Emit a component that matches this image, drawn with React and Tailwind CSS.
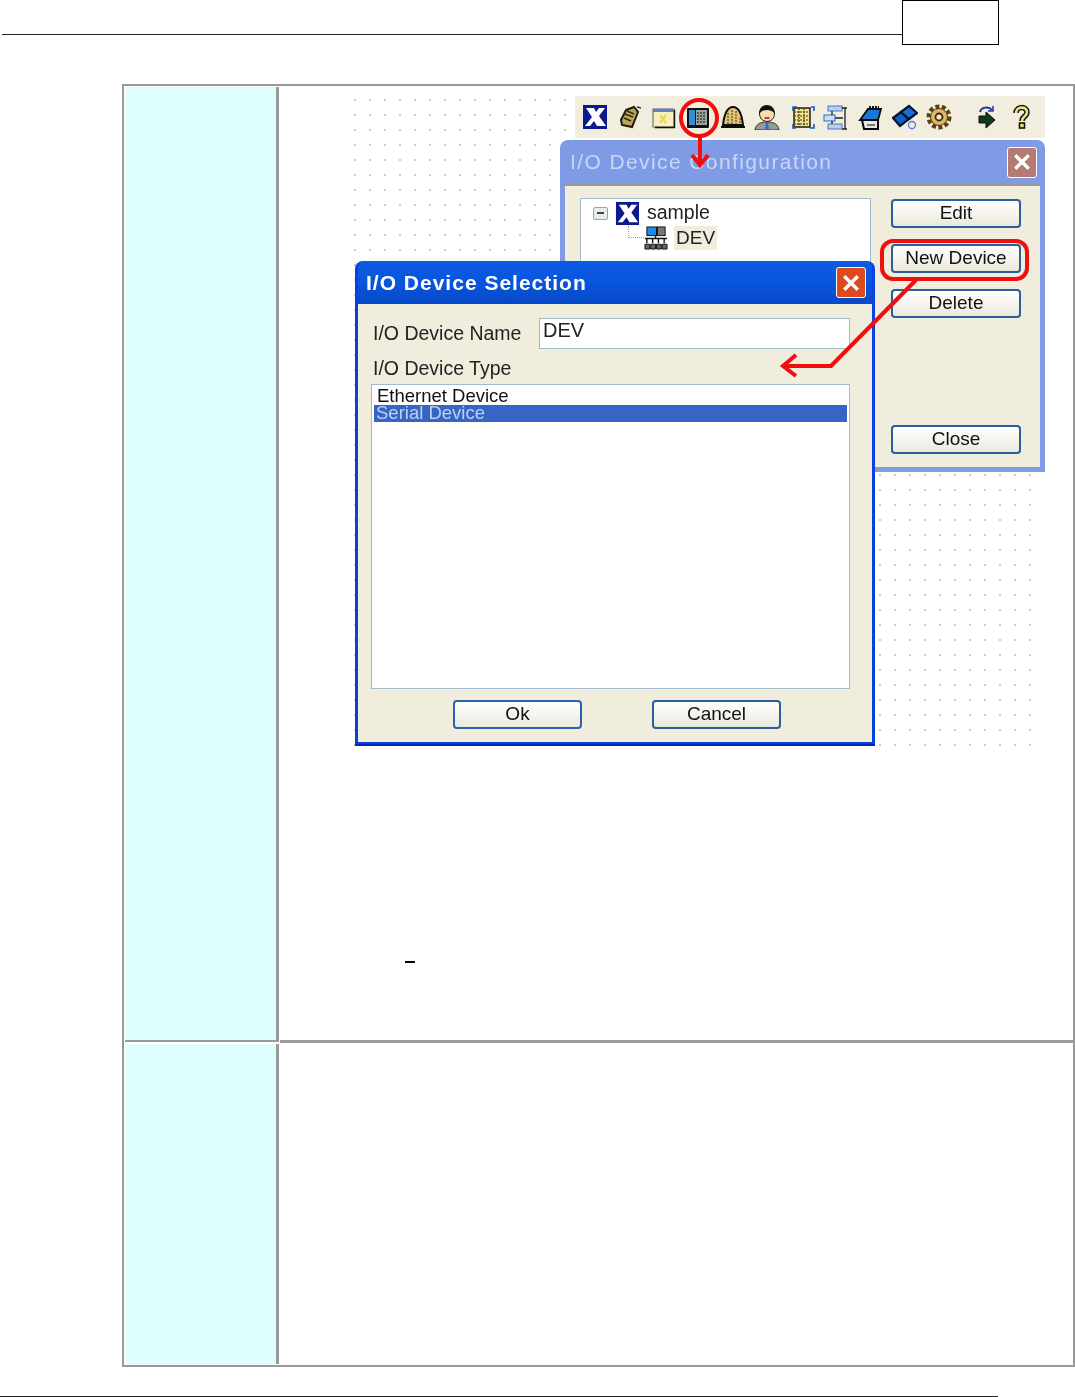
import React from "react";

const FONT = "font-['Liberation_Sans',Arial,sans-serif]";

// --- Toolbar icons (hand drawn, 26x26) ---
const Ico = ({ children, className = "w-[26px] h-[26px]" }) => (
	<svg viewBox="0 0 26 26" className={className}>
		{children}
	</svg>
);

const XLogo = ({ className }) => (
	<Ico className={className}>
		<rect x="1" y="1" width="24" height="24" fill="#0b1a8c" />
		<path d="M4 4h8l2 4 3-4h6l-6 8 7 10h-9l-3-5-4 5H3l7-9z" fill="#fff" />
	</Ico>
);

const NoteIco = () => (
	<Ico>
		<path d="M9 6l8-3 4 5-6 15-10-2-1-5z" fill="#bfa650" stroke="#1c1c10" strokeWidth="2" />
		<path d="M8 10l8 3M7 14l7 3M10 7l7 3" stroke="#2c2c18" strokeWidth="1.600" />
		<path d="M20 3l4 1" stroke="#333" strokeWidth="1.500" />
	</Ico>
);

const WindowIco = () => (
	<Ico>
		<rect x="2" y="5" width="21" height="18" fill="#f7f0b8" stroke="#777" strokeWidth="1.200" />
		<rect x="2" y="5" width="21" height="3" fill="#5f7fc8" />
		<path d="M9 11l6 8M15 11l-6 8" stroke="#e8d860" strokeWidth="2.200" />
		<path d="M23.500 6v17.500H4" stroke="#111" strokeWidth="1.400" fill="none" />
	</Ico>
);

const PanelIco = () => (
	<Ico>
		<rect x="2" y="4" width="22" height="20" rx="1" fill="#111" />
		<rect x="4" y="6" width="6" height="15" fill="#2f8fe0" />
		<rect x="11" y="6" width="11" height="15" fill="#9aa49a" />
		<path d="M13 8v11M16 8v11M19 8v11" stroke="#333" strokeWidth="1.400" strokeDasharray="2 1" />
	</Ico>
);

const DomeIco = () => (
	<Ico>
		<path d="M3 21c1-9 4-18 10-18s9 9 10 18z" fill="#e0c478" stroke="#0c0c0c" strokeWidth="2" />
		<path d="M8 9v11M12 6v14M16 7v13M20 14v6" stroke="#8f7630" strokeWidth="1.800" strokeDasharray="2 1" />
		<path d="M1 23h24" stroke="#0c0c0c" strokeWidth="2" />
	</Ico>
);

const PersonIco = () => (
	<Ico>
		<path d="M1 26c1-6 5-8 12-8s11 2 12 8z" fill="#9a9a90" stroke="#333" />
		<path d="M12 18h2l1 8h-4z" fill="#2f6fd0" />
		<circle cx="13" cy="10" r="7.500" fill="#f8dcae" stroke="#222" />
		<path d="M5 10c0-6 4-9 8-9s8 3 8 9c-2-3-5-4-8-4s-6 1-8 4z" fill="#111" />
		<path d="M10.500 14h5" stroke="#e01818" strokeWidth="1.800" />
	</Ico>
);

const ScrollIco = () => (
	<Ico>
		<rect x="5" y="4" width="16" height="19" fill="#efe48a" stroke="#111" strokeWidth="1.400" />
		<path d="M5 8h16M5 12h16M5 16h16M5 20h16M10 4v19M15 4v19" stroke="#3a3a18" strokeWidth="1.200" strokeDasharray="2 1" />
		<path d="M4 7V3h4M22 3h3v4M4 20v4h3M25 20v4h-4" stroke="#1f57c0" strokeWidth="1.600" fill="none" />
	</Ico>
);

const TreeIco = () => (
	<Ico>
		<rect x="5" y="2" width="14" height="5" fill="#b8d0ee" stroke="#4a78c0" />
		<rect x="1" y="11" width="11" height="6" fill="#cfe0f4" stroke="#1f68d8" />
		<rect x="5" y="20" width="14" height="5" fill="#b8d0ee" stroke="#4a78c0" />
		<path d="M12 14h8M9 7v4M9 17v3M19 4h5M22 4v21M19 25h5" stroke="#222" strokeWidth="1.300" fill="none" />
	</Ico>
);

const BookIco = () => (
	<Ico>
		<path d="M3 16L11 5h13l-3 11z" fill="#1878d8" stroke="#0a0a0a" strokeWidth="1.800" />
		<path d="M5 16h16v9H7z" fill="#e8e8e0" stroke="#0a0a0a" strokeWidth="2" />
		<path d="M12 3h10" stroke="#111" strokeWidth="2" strokeDasharray="2 1" />
		<path d="M10 21h8" stroke="#555" strokeWidth="1.500" />
	</Ico>
);

const BlocksIco = () => (
	<Ico>
		<path d="M1 14l8-6 8 7-9 7z" fill="#0f5fc0" stroke="#06122e" strokeWidth="2.200" />
		<path d="M9 8l8-6 8 7-8 6z" fill="#1670d8" stroke="#06122e" strokeWidth="2.200" />
		<circle cx="20" cy="21" r="3.500" fill="none" stroke="#5878d8" strokeWidth="1.300" />
	</Ico>
);

const GearIco = () => (
	<Ico>
		<circle cx="13" cy="13" r="10.500" fill="none" stroke="#5a3f10" strokeWidth="4" strokeDasharray="4 2.500" />
		<circle cx="13" cy="13" r="8.500" fill="#dcb868" stroke="#4a3410" />
		<circle cx="13" cy="13" r="3.500" fill="#f6eccc" stroke="#3a2808" strokeWidth="1.800" />
	</Ico>
);

const ForwardIco = () => (
	<Ico>
		<path d="M7 8c1-5 9-6 12-2" fill="none" stroke="#2030a8" strokeWidth="2" />
		<path d="M20 2v5h-5" fill="none" stroke="#2030a8" strokeWidth="1.500" />
		<path d="M6 12h7V8l9 8-9 8v-5H6z" fill="#123a18" stroke="#0c0c0c" />
	</Ico>
);

const HelpIco = () => (
	<Ico>
		<path d="M8 9c0-7 11-7 11-1 0 5-5 4-5 9" fill="none" stroke="#111" strokeWidth="5.500" />
		<path d="M8 9c0-7 11-7 11-1 0 5-5 4-5 9" fill="none" stroke="#eee27a" strokeWidth="2.600" />
		<rect x="11.500" y="19" width="5" height="5" fill="#eee27a" stroke="#111" strokeWidth="1.600" />
	</Ico>
);

const NetworkIco = () => (
	<svg viewBox="0 0 25 25" className="w-[24px] h-[24px]">
		<rect x="3" y="1" width="10" height="9" fill="#1a8cf0" stroke="#111" />
		<rect x="14" y="1" width="8" height="9" fill="#777" stroke="#111" />
		<path d="M1 13h23M12 10v3M3 13v5M9 13v5M15 13v5M21 13v5" stroke="#111" strokeWidth="1.400" />
		<path d="M1 19h5v5H1zM7 19h5v5H7zM13 19h5v5h-5zM19 19h5v5h-5z" fill="#666" stroke="#111" />
	</svg>
);

const XpClose = ({ className }) => (
	<div className={`flex items-center justify-center border border-white rounded-[3px] w-[30px] h-[31px] ${className}`}>
		<svg viewBox="0 0 16 16" className="w-[18px] h-[18px]">
			<path d="M2 2l12 12M14 2L2 14" stroke="#fff" strokeWidth="3" />
		</svg>
	</div>
);

const XpButton = ({ label, className = "" }) => (
	<div className={`flex items-center justify-center h-[29px] rounded-[4px] border-2 border-[#2a5f9c] bg-gradient-to-b from-white to-[#ebe9dc] text-[19px] leading-none text-[#111] pb-[3px] ${className}`}>
		{label}
	</div>
);

const TOOLBAR = [XLogo, NoteIco, WindowIco, PanelIco, DomeIco, PersonIco, ScrollIco, TreeIco, BookIco, BlocksIco, GearIco];

// the pasted screenshot: overlapping windows on a dotted canvas
const Screenshot = () => (
	<div className={`relative w-[693px] h-[653px] ml-[72px] mt-[10px] blur-[0.4px] ${FONT}`}>
		<div className="absolute left-0 top-0 w-[683px] h-[653px] bg-[radial-gradient(circle_at_3px_4px,#cccccc_0.8px,transparent_0.8px)] bg-[length:15px_15px]" />

		{/* toolbar */}
		<div className="absolute left-[223px] top-0 w-[470px] h-[42px] bg-[#f1eee0] flex items-center pl-[3px]">
			{TOOLBAR.map((Icon, i) => (
				<div key={i} className="w-[34.400px] flex justify-center">
					<Icon className="w-[26px] h-[26px]" />
				</div>
			))}
			<div className="w-[34.400px] flex justify-center ml-[13px]">
				<ForwardIco />
			</div>
			<div className="w-[34.400px] flex justify-center">
				<HelpIco />
			</div>
		</div>

		{/* I/O Device Configuration, inactive */}
		<div className="absolute left-[208px] top-[44px] w-[485px] h-[332px] rounded-t-[8px] bg-[#7f9be6] flex flex-col px-[5px] pb-[5px]">
			<div className="h-[44px] shrink-0 flex items-center justify-between pl-[5px] pr-[3px] text-[21px] font-normal tracking-[1.400px] text-[#c9d6f5]">
				<span>I/O Device Configuration</span>
				<XpClose className="bg-[#b57a72]" />
			</div>
			<div className="flex-1 bg-[#f0eddd] border-t-2 border-[#9a9a90] flex pl-[15px] pr-[19px] pt-[13px] pb-[13px] justify-between">
				<div className="w-[291px] h-[240px] -mt-px bg-white border border-[#a3b9cc] pl-[12px] pt-[1px] text-[19.500px] text-[#222]">
					<div className="flex items-center gap-[7px] h-[26px]">
						<div className="w-[15px] h-[13px] rounded-[2px] border border-[#8fa6bd] bg-[#e8ecec] flex items-center justify-center">
							<div className="w-[7px] h-[2px] bg-[#444]" />
						</div>
						<XLogo className="w-[25px] h-[25px]" />
						<span>sample</span>
					</div>
					<div className="flex items-center ml-[35px] h-[23px]">
						<div className="w-[16px] h-[12px] -mt-[12px] border-l border-b border-dotted border-[#999]" />
						<NetworkIco />
						<span className="ml-[6px] px-[2px] text-[19px] leading-[24px] bg-[#f0eddd]">DEV</span>
					</div>
				</div>
				<div className="w-[130px] flex flex-col gap-[16px]">
					<XpButton label="Edit" />
					<XpButton label="New Device" />
					<XpButton label="Delete" />
					<XpButton label="Close" className="mt-auto" />
				</div>
			</div>
		</div>

		{/* I/O Device Selection, active */}
		<div className="absolute left-[3px] top-[165px] w-[520px] h-[485px] rounded-t-[8px] bg-[#0a3fe0] border-b-2 border-[#0028b4] flex flex-col px-[3px] pb-[2px]">
			<div className="h-[43px] shrink-0 rounded-t-[6px] bg-gradient-to-b from-[#0a5ce4] via-[#0a55dc] to-[#0548c8] flex items-center justify-between pl-[8px] pr-[6px] text-[21px] font-bold text-white">
				<span className="tracking-[1px]">I/O Device Selection</span>
				<XpClose className="bg-[#dd4a1e]" />
			</div>
			<div className="flex-1 bg-[#f0eddd] flex flex-col px-[13px] pt-[14px] text-[19.500px] text-[#222]">
				<div className="flex items-center justify-between pl-[2px] pr-[9px]">
					<span>I/O Device Name</span>
					<div className="w-[311px] h-[31px] bg-white border border-[#a3b9cc] pl-[3px] text-[20px] leading-[22px]">DEV</div>
				</div>
				<div className="pl-[2px] mt-[5px] h-[28px] leading-[28px]">I/O Device Type</div>
				<div className="w-[479px] h-[305px] mt-[2px] bg-white border border-[#a3b9cc] px-[2px] pt-[1px] text-[18.500px]">
					<div className="pl-[3px] h-[19px] leading-[19px] text-[#111]">Ethernet Device</div>
					<div className="pl-[2px] h-[17px] leading-[16px] bg-[#3566c4] text-[#bcd0f2]">Serial Device</div>
				</div>
				<div className="flex pl-[82px] gap-[70px] mt-[11px]">
					<XpButton label="Ok" className="w-[129px] border-[#2a62b0] from-[#eef4fc] to-[#cfe0f5]" />
					<XpButton label="Cancel" className="w-[129px]" />
				</div>
			</div>
		</div>

		{/* red annotations, page coordinates */}
		<svg viewBox="352 96 693 653" className="absolute inset-0 w-[693px] h-[653px]" fill="none" stroke="#f00e0e" strokeWidth="4">
			<circle cx="699" cy="118" r="18" />
			<path d="M700 137v28M692 155l8 10 8-10" />
			<rect x="882" y="241" width="145" height="38" rx="11" />
			<path d="M916 280l-85 86h-46M796 355l-13 11 13 10" />
		</svg>
	</div>
);

export default function App() {
	return (
		<div className="w-[1075px] h-[1397px] bg-white flex flex-col overflow-hidden">
			{/* page header */}
			<div className="h-[84px] shrink-0 flex items-start pl-[2px]">
				<div className="w-[900px] h-[35px] border-b border-[#222]" />
				<div className="w-[97px] h-[45px] border border-black" />
			</div>

			{/* table */}
			<div className="ml-[122px] w-[953px] h-[1283px] shrink-0 border-2 border-[#999] grid grid-cols-[156px_1fr] grid-rows-[957px_1fr]">
				<div className="bg-[#dfffff] border-r-[4px] border-b-[3px] border-[#999] outline-1 -outline-offset-1 outline-white" />
				<div className="border-b-[3px] border-[#999]">
					<Screenshot />
					<div className="w-[10px] h-[2px] bg-black ml-[125px] mt-[212px]" />
				</div>
				<div className="bg-[#dfffff] border-r-[4px] border-[#999] outline-1 -outline-offset-1 outline-white" />
				<div />
			</div>

			{/* page footer */}
			<div className="w-[998px] h-px mt-[29px] shrink-0 bg-[#222]" />
		</div>
	);
}
